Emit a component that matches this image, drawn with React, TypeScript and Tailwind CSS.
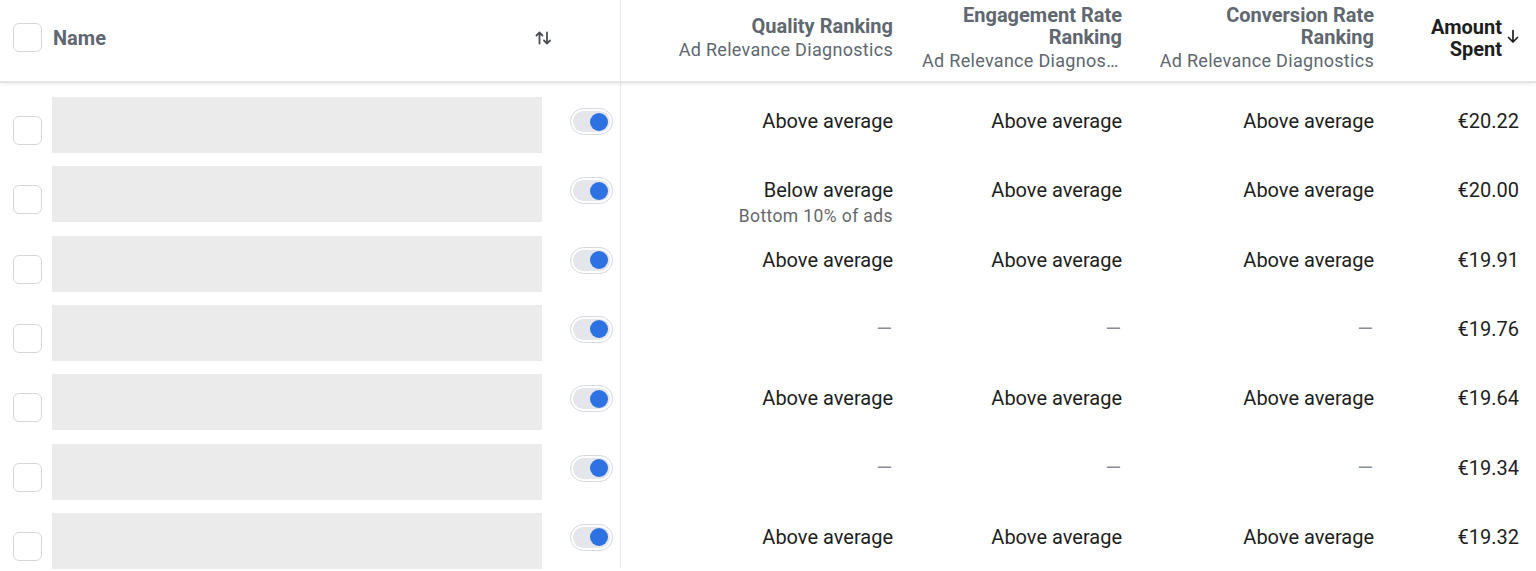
import React from "react";

type Cell = { main: string; sub?: string } | null;
type Row = { q: Cell; e: Cell; c: Cell; amount: string };

const A: Cell = { main: "Above average" };

const rows: Row[] = [
  { q: A, e: A, c: A, amount: "€20.22" },
  { q: { main: "Below average", sub: "Bottom 10% of ads" }, e: A, c: A, amount: "€20.00" },
  { q: A, e: A, c: A, amount: "€19.91" },
  { q: null, e: null, c: null, amount: "€19.76" },
  { q: A, e: A, c: A, amount: "€19.64" },
  { q: null, e: null, c: null, amount: "€19.34" },
  { q: A, e: A, c: A, amount: "€19.32" },
];

function Checkbox() {
  return <div className="w-[29px] h-[29px] rounded-[6px] border-[1.5px] border-[#d3d6db] bg-white shrink-0" />;
}

function Toggle() {
  return (
    <div className="w-[43px] h-[27px] rounded-full border-[1.5px] border-[#d5d8dc] bg-white p-[2px] shrink-0">
      <div className="w-full h-full rounded-full bg-[#e4e6eb] flex items-center justify-end pr-[2px]">
        <div className="w-[18px] h-[18px] rounded-full bg-[#2d72e0]" />
      </div>
    </div>
  );
}

function SortIcon() {
  return (
    <svg width="17" height="14" viewBox="0 0 17 14" fill="none" stroke="#4b4f56" strokeWidth="1.8" strokeLinecap="round" strokeLinejoin="round">
      <path d="M4.5 12.5V1.5M1.5 4.5L4.5 1.5L7.5 4.5" />
      <path d="M12 1.5V12.5M9 9.5L12 12.5L15 9.5" />
    </svg>
  );
}

function DownArrow() {
  return (
    <svg width="12" height="15" viewBox="0 0 12 15" fill="none" stroke="#1c1e21" strokeWidth="1.7" strokeLinecap="round" strokeLinejoin="round">
      <path d="M6 1.5V13M1.5 8.5L6 13L10.5 8.5" />
    </svg>
  );
}

function RankCell({ cell, w, pr }: { cell: Cell; w: string; pr: string }) {
  return (
    <div className={`${w} ${pr} shrink-0 flex flex-col items-end pt-[26px] text-right`}>
      {cell ? (
        <>
          <div className="text-[20px] leading-[24px] text-[#1c1e21]">{cell.main}</div>
          {cell.sub && <div className="text-[17.5px] leading-[28px] tracking-[0.4px] text-[#65676b]">{cell.sub}</div>}
        </>
      ) : (
        <div className="text-[20px] leading-[24px] text-[#8a8d91] pr-[1px]">—</div>
      )}
    </div>
  );
}

export default function App() {
  return (
    <div className="w-[1536px] h-[571px] overflow-hidden bg-white font-[Roboto,'Liberation_Sans',sans-serif]">
      {/* Header */}
      <div className="flex h-[83px] border-b-[2px] border-[#e4e4e4] shadow-[0_2px_3px_rgba(0,0,0,0.06)] relative">
        <div className="w-[621px] shrink-0 border-r border-[#e6e7ea] flex items-center pb-[6px] pl-[13px]">
          <Checkbox />
          <div className="ml-[11px] text-[20px] font-bold text-[#606770]">Name</div>
          <div className="flex-1" />
          <div className="mr-[68px] mt-[1px]">
            <SortIcon />
          </div>
        </div>
        <div className="w-[288px] pr-[16px] shrink-0 flex flex-col items-end justify-center pb-[6px] text-right">
          <div className="text-[20px] leading-[23px] font-bold text-[#606770]">Quality Ranking</div>
          <div className="text-[18px] leading-[23px] tracking-[0.3px] text-[#606770]">Ad Relevance Diagnostics</div>
        </div>
        <div className="w-[230px] pr-[17px] shrink-0 flex flex-col items-end justify-center pb-[6px] text-right">
          <div className="text-[20px] leading-[22.5px] font-bold text-[#606770]">Engagement Rate</div>
          <div className="text-[20px] leading-[22.5px] font-bold text-[#606770]">Ranking</div>
          <div className="w-[200px] text-[18px] leading-[23px] tracking-[0.3px] text-[#606770] truncate">Ad Relevance Diagnostics</div>
        </div>
        <div className="w-[251px] pr-[16px] shrink-0 flex flex-col items-end justify-center pb-[6px] text-right">
          <div className="text-[20px] leading-[22.5px] font-bold text-[#606770]">Conversion Rate</div>
          <div className="text-[20px] leading-[22.5px] font-bold text-[#606770]">Ranking</div>
          <div className="text-[18px] leading-[23px] tracking-[0.3px] text-[#606770] whitespace-nowrap">Ad Relevance Diagnostics</div>
        </div>
        <div className="flex-1 pr-[17px] flex items-center justify-end pb-[6px] gap-[5px]">
          <div className="flex flex-col items-end text-right">
            <div className="text-[20px] leading-[22px] font-bold text-[#1c1e21]">Amount</div>
            <div className="text-[20px] leading-[22px] font-bold text-[#1c1e21]">Spent</div>
          </div>
          <div className="mb-[2px]">
            <DownArrow />
          </div>
        </div>
      </div>

      {/* Body */}
      <div className="flex flex-col">
        {rows.map((r, i) => (
          <div key={i} className="flex h-[69.33px] shrink-0">
            <div className="w-[621px] shrink-0 border-r border-[#e6e7ea] flex items-start pl-[13px]">
              <div className="mt-[33px]">
                <Checkbox />
              </div>
              <div className="ml-[10px] mt-[14px] w-[490px] h-[56px] bg-[#ebebeb] shrink-0" />
              <div className="ml-[28px] mt-[25px]">
                <Toggle />
              </div>
            </div>
            <RankCell cell={r.q} w="w-[288px]" pr="pr-[16px]" />
            <RankCell cell={r.e} w="w-[230px]" pr="pr-[17px]" />
            <RankCell cell={r.c} w="w-[251px]" pr="pr-[16px]" />
            <div className="flex-1 pr-[17px] pt-[26px] text-right text-[20px] leading-[24px] text-[#1c1e21]">{r.amount}</div>
          </div>
        ))}
      </div>
    </div>
  );
}
